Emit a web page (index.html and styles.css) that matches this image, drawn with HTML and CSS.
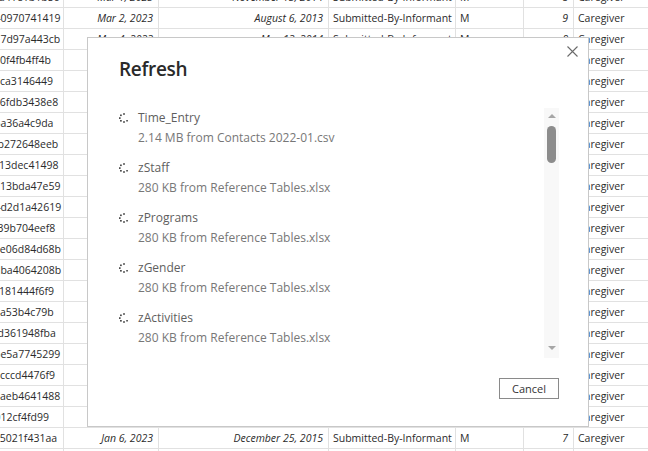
FILE: index.html
```html
<!DOCTYPE html>
<html>
<head>
<meta charset="utf-8">
<link rel="stylesheet" href="styles.css">
</head>
<body>
<div class="sheet">
  <div class="grid">
    <div class="c id">4ca41e1b1b5c</div><div class="c dt">Mar 1, 2023</div><div class="c dt">November 13, 2014</div><div class="c tx">Submitted-By-Informant</div><div class="c tx">M</div><div class="c num">8</div><div class="c tx">Caregiver</div>
    <div class="c id">b40970741419</div><div class="c dt">Mar 2, 2023</div><div class="c dt">August 6, 2013</div><div class="c tx">Submitted-By-Informant</div><div class="c tx">M</div><div class="c num">9</div><div class="c tx">Caregiver</div>
    <div class="c id">b17d97a443cb</div><div class="c dt">Mar 4, 2023</div><div class="c dt">May 13, 2014</div><div class="c tx">Submitted-By-Informant</div><div class="c tx">M</div><div class="c num">8</div><div class="c tx">Caregiver</div>
    <div class="c id">e90f4fb4ff4b</div><div class="c dt">Mar 4, 2023</div><div class="c dt">June 2, 2014</div><div class="c tx">Submitted-By-Informant</div><div class="c tx">F</div><div class="c num">6</div><div class="c tx">Caregiver</div>
    <div class="c id">37ca3146449</div><div class="c dt">Mar 5, 2023</div><div class="c dt">July 9, 2012</div><div class="c tx">Submitted-By-Informant</div><div class="c tx">M</div><div class="c num">10</div><div class="c tx">Caregiver</div>
    <div class="c id">a16fdb3438e8</div><div class="c dt">Mar 6, 2023</div><div class="c dt">May 1, 2015</div><div class="c tx">Submitted-By-Informant</div><div class="c tx">F</div><div class="c num">7</div><div class="c tx">Caregiver</div>
    <div class="c id">d5a36a4c9da</div><div class="c dt">Mar 8, 2023</div><div class="c dt">April 3, 2013</div><div class="c tx">Submitted-By-Informant</div><div class="c tx">M</div><div class="c num">9</div><div class="c tx">Caregiver</div>
    <div class="c id">8fb272648eeb</div><div class="c dt">Mar 9, 2023</div><div class="c dt">March 21, 2014</div><div class="c tx">Submitted-By-Informant</div><div class="c tx">F</div><div class="c num">8</div><div class="c tx">Caregiver</div>
    <div class="c id">0c13dec41498</div><div class="c dt">Mar 11, 2023</div><div class="c dt">October 2, 2012</div><div class="c tx">Submitted-By-Informant</div><div class="c tx">M</div><div class="c num">10</div><div class="c tx">Caregiver</div>
    <div class="c id">7e13bda47e59</div><div class="c dt">Mar 12, 2023</div><div class="c dt">January 8, 2015</div><div class="c tx">Submitted-By-Informant</div><div class="c tx">F</div><div class="c num">7</div><div class="c tx">Caregiver</div>
    <div class="c id">b4d2d1a42619</div><div class="c dt">Mar 14, 2023</div><div class="c dt">July 30, 2013</div><div class="c tx">Submitted-By-Informant</div><div class="c tx">M</div><div class="c num">9</div><div class="c tx">Caregiver</div>
    <div class="c id">2f39b704eef8</div><div class="c dt">Mar 15, 2023</div><div class="c dt">June 11, 2014</div><div class="c tx">Submitted-By-Informant</div><div class="c tx">M</div><div class="c num">8</div><div class="c tx">Caregiver</div>
    <div class="c id">a1e06d84d68b</div><div class="c dt">Mar 16, 2023</div><div class="c dt">May 19, 2012</div><div class="c tx">Submitted-By-Informant</div><div class="c tx">F</div><div class="c num">10</div><div class="c tx">Caregiver</div>
    <div class="c id">6dba4064208b</div><div class="c dt">Mar 18, 2023</div><div class="c dt">August 27, 2015</div><div class="c tx">Submitted-By-Informant</div><div class="c tx">M</div><div class="c num">7</div><div class="c tx">Caregiver</div>
    <div class="c id">c5181444f6f9</div><div class="c dt">Mar 19, 2023</div><div class="c dt">April 14, 2013</div><div class="c tx">Submitted-By-Informant</div><div class="c tx">F</div><div class="c num">9</div><div class="c tx">Caregiver</div>
    <div class="c id">93a53b4c79b</div><div class="c dt">Mar 21, 2023</div><div class="c dt">March 3, 2014</div><div class="c tx">Submitted-By-Informant</div><div class="c tx">M</div><div class="c num">8</div><div class="c tx">Caregiver</div>
    <div class="c id">f0d361948fba</div><div class="c dt">Mar 22, 2023</div><div class="c dt">November 5, 2012</div><div class="c tx">Submitted-By-Informant</div><div class="c tx">M</div><div class="c num">10</div><div class="c tx">Caregiver</div>
    <div class="c id">4be5a7745299</div><div class="c dt">Mar 23, 2023</div><div class="c dt">February 16, 2015</div><div class="c tx">Submitted-By-Informant</div><div class="c tx">F</div><div class="c num">7</div><div class="c tx">Caregiver</div>
    <div class="c id">e8cccd4476f9</div><div class="c dt">Mar 25, 2023</div><div class="c dt">September 9, 2013</div><div class="c tx">Submitted-By-Informant</div><div class="c tx">M</div><div class="c num">9</div><div class="c tx">Caregiver</div>
    <div class="c id">17aeb4641488</div><div class="c dt">Mar 26, 2023</div><div class="c dt">December 1, 2014</div><div class="c tx">Submitted-By-Informant</div><div class="c tx">F</div><div class="c num">8</div><div class="c tx">Caregiver</div>
    <div class="c id">d012cf4fd99</div><div class="c dt">Mar 28, 2023</div><div class="c dt">July 22, 2012</div><div class="c tx">Submitted-By-Informant</div><div class="c tx">M</div><div class="c num">10</div><div class="c tx">Caregiver</div>
    <div class="c id">a85021f431aa</div><div class="c dt">Jan 6, 2023</div><div class="c dt">December 25, 2015</div><div class="c tx">Submitted-By-Informant</div><div class="c tx">M</div><div class="c num">7</div><div class="c tx">Caregiver</div>
    <div class="c id">3c4e1d7a9b21</div><div class="c dt">Jan 7, 2023</div><div class="c dt">March 8, 2013</div><div class="c tx">Submitted-By-Informant</div><div class="c tx">F</div><div class="c num">9</div><div class="c tx">Caregiver</div>
  </div>
</div>

<div class="dialog">
  <button class="close" aria-label="Close">
    <svg width="11" height="11" viewBox="0 0 11 11"><path d="M0.5 0.5 L10.5 10.5 M10.5 0.5 L0.5 10.5" stroke="#6a6a6a" stroke-width="1.1" fill="none"/></svg>
  </button>
  <h1 class="title">Refresh</h1>
  <div class="listwrap">
    <ul class="list">
      <li class="item"><div class="name"><svg class="spin" width="10" height="10" viewBox="0 0 10 10"><g fill="#3a3a3a"><rect x="4.2" y="0.2" width="1.6" height="1.6"/><rect x="1.1" y="1.5" width="1.6" height="1.6"/><rect x="0" y="4.3" width="1.6" height="1.6"/><rect x="1.1" y="7.0" width="1.6" height="1.6"/><rect x="4.2" y="8.2" width="1.6" height="1.6"/><rect x="7.3" y="7.0" width="1.5" height="1.5"/></g></svg>Time_Entry</div><div class="src">2.14 MB from Contacts 2022-01.csv</div></li>
      <li class="item"><div class="name"><svg class="spin" width="10" height="10" viewBox="0 0 10 10"><g fill="#3a3a3a"><rect x="4.2" y="0.2" width="1.6" height="1.6"/><rect x="1.1" y="1.5" width="1.6" height="1.6"/><rect x="0" y="4.3" width="1.6" height="1.6"/><rect x="1.1" y="7.0" width="1.6" height="1.6"/><rect x="4.2" y="8.2" width="1.6" height="1.6"/><rect x="7.3" y="7.0" width="1.5" height="1.5"/></g></svg>zStaff</div><div class="src">280 KB from Reference Tables.xlsx</div></li>
      <li class="item"><div class="name"><svg class="spin" width="10" height="10" viewBox="0 0 10 10"><g fill="#3a3a3a"><rect x="4.2" y="0.2" width="1.6" height="1.6"/><rect x="1.1" y="1.5" width="1.6" height="1.6"/><rect x="0" y="4.3" width="1.6" height="1.6"/><rect x="1.1" y="7.0" width="1.6" height="1.6"/><rect x="4.2" y="8.2" width="1.6" height="1.6"/><rect x="7.3" y="7.0" width="1.5" height="1.5"/></g></svg>zPrograms</div><div class="src">280 KB from Reference Tables.xlsx</div></li>
      <li class="item"><div class="name"><svg class="spin" width="10" height="10" viewBox="0 0 10 10"><g fill="#3a3a3a"><rect x="4.2" y="0.2" width="1.6" height="1.6"/><rect x="1.1" y="1.5" width="1.6" height="1.6"/><rect x="0" y="4.3" width="1.6" height="1.6"/><rect x="1.1" y="7.0" width="1.6" height="1.6"/><rect x="4.2" y="8.2" width="1.6" height="1.6"/><rect x="7.3" y="7.0" width="1.5" height="1.5"/></g></svg>zGender</div><div class="src">280 KB from Reference Tables.xlsx</div></li>
      <li class="item"><div class="name"><svg class="spin" width="10" height="10" viewBox="0 0 10 10"><g fill="#3a3a3a"><rect x="4.2" y="0.2" width="1.6" height="1.6"/><rect x="1.1" y="1.5" width="1.6" height="1.6"/><rect x="0" y="4.3" width="1.6" height="1.6"/><rect x="1.1" y="7.0" width="1.6" height="1.6"/><rect x="4.2" y="8.2" width="1.6" height="1.6"/><rect x="7.3" y="7.0" width="1.5" height="1.5"/></g></svg>zActivities</div><div class="src">280 KB from Reference Tables.xlsx</div></li>
      <li class="item"><div class="name"><svg class="spin" width="10" height="10" viewBox="0 0 10 10"><g fill="#3a3a3a"><rect x="4.2" y="0.2" width="1.6" height="1.6"/><rect x="1.1" y="1.5" width="1.6" height="1.6"/><rect x="0" y="4.3" width="1.6" height="1.6"/><rect x="1.1" y="7.0" width="1.6" height="1.6"/><rect x="4.2" y="8.2" width="1.6" height="1.6"/><rect x="7.3" y="7.0" width="1.5" height="1.5"/></g></svg>zOutcomes</div><div class="src">280 KB from Reference Tables.xlsx</div></li>
    </ul>
    <div class="scrollbar">
      <span class="arrow up"></span>
      <span class="thumb"></span>
      <span class="spacer"></span>
      <span class="arrow down"></span>
    </div>
  </div>
  <div class="footer">
    <button class="btn">Cancel</button>
  </div>
</div>
</body>
</html>
```

FILE: styles.css
```css
html, body {
  margin: 0;
  padding: 0;
  width: 648px;
  height: 451px;
  overflow: hidden;
  background: #fff;
}

body {
  font-family: "Open Sans", "Noto Sans", sans-serif;
  color: #333;
  position: relative;
}

.sheet {
  overflow: hidden;
  width: 648px;
  height: 451px;
}

.grid {
  display: grid;
  grid-template-columns: 80px 95px 170px 127px 68px 50px 120px;
  grid-auto-rows: 21px;
  margin-top: -13px;
  margin-left: -16px;
  font-size: 10.5px;
  color: #2b2b2b;
}

.c {
  box-sizing: border-box;
  border-right: 1px solid #e1e1e1;
  border-bottom: 1px solid #e1e1e1;
  line-height: 20px;
  white-space: nowrap;
  overflow: hidden;
}

.id {
  padding-left: 4px;
}

.dt {
  text-align: right;
  font-style: italic;
  padding-right: 5px;
}

.tx {
  padding-left: 4px;
}

.num {
  text-align: right;
  font-style: italic;
  padding-right: 5px;
}

.dialog {
  position: absolute;
  left: 87px;
  top: 37px;
  width: 502px;
  height: 390px;
  box-sizing: border-box;
  border: 1px solid #c8c8c8;
  background: #fff;
  padding: 17px 29px 0 31px;
  display: flex;
  flex-direction: column;
}

.close {
  position: absolute;
  right: 10px;
  top: 8px;
  width: 11px;
  height: 11px;
  padding: 0;
  border: 0;
  background: transparent;
  display: flex;
}

.title {
  margin: 0;
  font-size: 19px;
  line-height: 28px;
  font-weight: 600;
  color: #2a2a2a;
  letter-spacing: -0.3px;
}

.listwrap {
  margin-top: 25px;
  height: 250px;
  display: flex;
}

.list {
  flex: 1;
  margin: 0;
  padding: 0;
  list-style: none;
  overflow: hidden;
}

.item {
  height: 50px;
  font-size: 12px;
  line-height: 20px;
}

.name {
  display: flex;
  align-items: center;
  color: #5e5e5e;
}

.spin {
  width: 10px;
  height: 10px;
  margin-right: 9px;
  flex: none;
}

.src {
  padding-left: 19px;
  color: #777;
}

.scrollbar {
  width: 15px;
  background: #f8f8f8;
  display: flex;
  flex-direction: column;
  align-items: center;
}

.arrow {
  width: 0;
  height: 0;
  border-left: 4px solid transparent;
  border-right: 4px solid transparent;
}

.arrow.up {
  margin-top: 6px;
  border-bottom: 4px solid #a6a6a6;
}

.arrow.down {
  margin-bottom: 8px;
  border-top: 4px solid #a6a6a6;
}

.thumb {
  margin-top: 8px;
  width: 9px;
  height: 37px;
  border-radius: 5px;
  background: #8c8c8c;
}

.spacer {
  flex: 1;
}

.footer {
  margin-top: 20px;
  display: flex;
  justify-content: flex-end;
}

.btn {
  width: 60px;
  height: 21px;
  box-sizing: border-box;
  border: 1px solid #8a8a8a;
  background: #fff;
  font-family: "Open Sans", "Noto Sans", sans-serif;
  font-size: 11px;
  color: #333;
  padding: 0;
  line-height: 19px;
}
```
